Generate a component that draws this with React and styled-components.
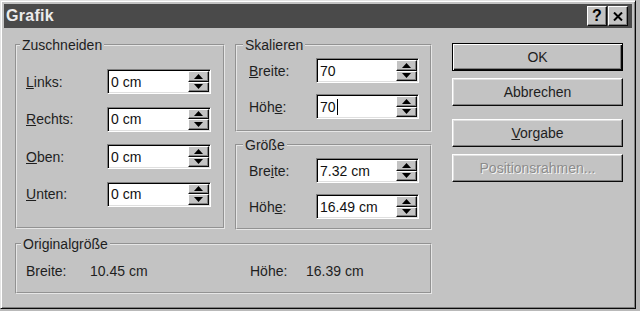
import React from 'react';
import styled, { createGlobalStyle } from 'styled-components';

const GlobalStyle = createGlobalStyle`
    html, body {
        margin: 0;
        padding: 0;
        background: #b9b9b9;
    }
    body {
        font-family: "Liberation Sans", Arial, sans-serif;
        font-size: 14px;
        color: #1e1e1e;
    }
`

const Window = styled.div`
    box-sizing: border-box;
    width: 636px;
    height: 309px;
    background: #c3c3c3;
    border: 1px solid;
    border-color: #e4e4e4 #0a0a0a #0a0a0a #e4e4e4;
    box-shadow: inset 1px 1px 0 #fff, inset -1px -1px 0 #808080;
    padding: 3px;
    display: flex;
    flex-direction: column;
`

const TitleBar = styled.div`
    height: 24px;
    flex: none;
    background: #4a4a4a;
    display: flex;
    align-items: center;
    padding: 0 4px 0 2px;
    gap: 1px;
`

const Title = styled.span`
    flex: 1;
    color: #ececec;
    font-size: 16px;
    font-weight: bold;
    letter-spacing: 0.3px;
`

const TitleButton = styled.div`
    box-sizing: border-box;
    width: 20px;
    height: 20px;
    background: #c3c3c3;
    border: 1px solid;
    border-color: #fff #0a0a0a #0a0a0a #fff;
    box-shadow: inset -1px -1px 0 #808080;
    display: flex;
    align-items: center;
    justify-content: center;
    font-size: 16px;
    font-weight: bold;
    color: #000;
`

const Body = styled.div`
    display: flex;
    padding: 9px 0 0 11px;
    gap: 20px;
`

const LeftCol = styled.div`
    width: 417px;
    display: flex;
    flex-direction: column;
    gap: 6px;
`

const TopRow = styled.div`
    display: flex;
    gap: 10px;
`

const Stack = styled.div`
    display: flex;
    flex-direction: column;
    gap: 5px;
`

const Group = styled.fieldset`
    box-sizing: border-box;
    margin: 0;
    padding: 0;
    min-width: 0;
    width: ${p => p.$w}px;
    height: ${p => p.$h}px;
    border: 2px groove #e6e6e6;
`

const Legend = styled.legend`
    font-size: 14px;
    line-height: 16px;
    padding: 0 2px;
    margin-left: ${p => p.$ml}px;
`

const Rows = styled.div`
    display: flex;
    flex-direction: column;
    gap: ${p => p.$gap}px;
    padding: ${p => p.$pt}px 0 0 ${p => p.$pl}px;
`

const Row = styled.div`
    display: flex;
    align-items: center;
    height: ${p => p.$h || 25}px;
`

const Label = styled.span`
    width: ${p => p.$w}px;
    flex: none;
    white-space: nowrap;
`

const Field = styled.div`
    box-sizing: border-box;
    width: ${p => p.$w}px;
    height: 25px;
    display: flex;
    background: #fff;
    border: 1px solid;
    border-color: #808080 #fff #fff #808080;
    box-shadow: inset 1px 1px 0 #000, inset -1px -1px 0 #dfdfdf;
    padding: 1px;
`

const FieldText = styled.div`
    flex: 1;
    display: flex;
    align-items: center;
    padding-left: 2px;
    color: #111;
`

const Caret = styled.span`
    width: 1px;
    height: 16px;
    margin-left: 1px;
    background: #000;
`

const Spinner = styled.div`
    width: 21px;
    display: flex;
    flex-direction: column;
`

const SpinButton = styled.div`
    flex: 1;
    box-sizing: border-box;
    background: #c3c3c3;
    border: 1px solid;
    border-color: #fff #0a0a0a #0a0a0a #fff;
    box-shadow: inset -1px -1px 0 #808080;
    display: flex;
    align-items: center;
    justify-content: center;
`

const ButtonCol = styled.div`
    width: 171px;
    margin-top: 6px;
    display: flex;
    flex-direction: column;
`

const Button = styled.div`
    box-sizing: border-box;
    height: 28px;
    margin-top: ${p => p.$mt || 0}px;
    display: flex;
    align-items: center;
    justify-content: center;
    background: #c3c3c3;
    border: 1px solid;
    border-color: ${p => p.$default ? '#000' : '#fff #0a0a0a #0a0a0a #fff'};
    box-shadow: ${p => p.$default
        ? 'inset 1px 1px 0 #fff, inset -1px -1px 0 #0a0a0a, inset -2px -2px 0 #808080'
        : 'inset -1px -1px 0 #808080, inset 1px 1px 0 #e0e0e0'};
    color: ${p => p.$disabled ? '#8c8c8c' : '#1e1e1e'};
    text-shadow: ${p => p.$disabled ? '1px 1px 0 #f4f4f4' : 'none'};
`

const Arrow = ({ down }) => (
    <svg width="9" height="5" viewBox="0 0 9 5">
        <polygon points={down ? '0,0 9,0 4.5,5' : '0,5 9,5 4.5,0'} fill="#000" />
    </svg>
)

const SpinField = ({ value, width, caret }) => (
    <Field $w={width}>
        <FieldText>{value}{caret && <Caret />}</FieldText>
        <Spinner>
            <SpinButton><Arrow /></SpinButton>
            <SpinButton><Arrow down /></SpinButton>
        </Spinner>
    </Field>
)

const cropRows = [
    { key: 'L', rest: 'inks:' },
    { key: 'R', rest: 'echts:' },
    { key: 'O', rest: 'ben:' },
    { key: 'U', rest: 'nten:' },
]

export default function App() {
    return (
        <>
            <GlobalStyle />
            <Window>
                <TitleBar>
                    <Title>Grafik</Title>
                    <TitleButton>?</TitleButton>
                    <TitleButton>
                        <svg width="10" height="9" viewBox="0 0 10 9">
                            <path d="M1 0.5 L9 8.5 M9 0.5 L1 8.5" stroke="#000" strokeWidth="2" />
                        </svg>
                    </TitleButton>
                </TitleBar>
                <Body>
                    <LeftCol>
                        <TopRow>
                            <Group $w={210} $h={192}>
                                <Legend $ml={3}>Zuschneiden</Legend>
                                <Rows $pt={16} $pl={9} $gap={12.5}>
                                    {cropRows.map(r => (
                                        <Row key={r.key}>
                                            <Label $w={81}><u>{r.key}</u>{r.rest}</Label>
                                            <SpinField value="0 cm" width={104} />
                                        </Row>
                                    ))}
                                </Rows>
                            </Group>
                            <Stack>
                                <Group $w={197} $h={95}>
                                    <Legend $ml={6}>Skalieren</Legend>
                                    <Rows $pt={5} $pl={12} $gap={11}>
                                        <Row>
                                            <Label $w={67}><u>B</u>reite:</Label>
                                            <SpinField value="70" width={103} />
                                        </Row>
                                        <Row>
                                            <Label $w={67}>Höh<u>e</u>:</Label>
                                            <SpinField value="70" width={103} caret />
                                        </Row>
                                    </Rows>
                                </Group>
                                <Group $w={197} $h={93}>
                                    <Legend $ml={6}>Größe</Legend>
                                    <Rows $pt={5} $pl={12} $gap={11}>
                                        <Row>
                                            <Label $w={67}>Bre<u>i</u>te:</Label>
                                            <SpinField value="7.32 cm" width={103} />
                                        </Row>
                                        <Row>
                                            <Label $w={67}>Höh<u>e</u>:</Label>
                                            <SpinField value="16.49 cm" width={103} />
                                        </Row>
                                    </Rows>
                                </Group>
                            </Stack>
                        </TopRow>
                        <Group $w={417} $h={58}>
                            <Legend $ml={4}>Originalgröße</Legend>
                            <Rows $pt={11} $pl={9} $gap={0}>
                                <Row $h={16}>
                                    <Label $w={64}>Breite:</Label>
                                    <Label $w={160}>10.45 cm</Label>
                                    <Label $w={56}>Höhe:</Label>
                                    <Label $w={80}>16.39 cm</Label>
                                </Row>
                            </Rows>
                        </Group>
                    </LeftCol>
                    <ButtonCol>
                        <Button $default>OK</Button>
                        <Button $mt={7}>Abbrechen</Button>
                        <Button $mt={13}><span><u>V</u>orgabe</span></Button>
                        <Button $mt={7} $disabled>Positionsrahmen...</Button>
                    </ButtonCol>
                </Body>
            </Window>
        </>
    );
}
